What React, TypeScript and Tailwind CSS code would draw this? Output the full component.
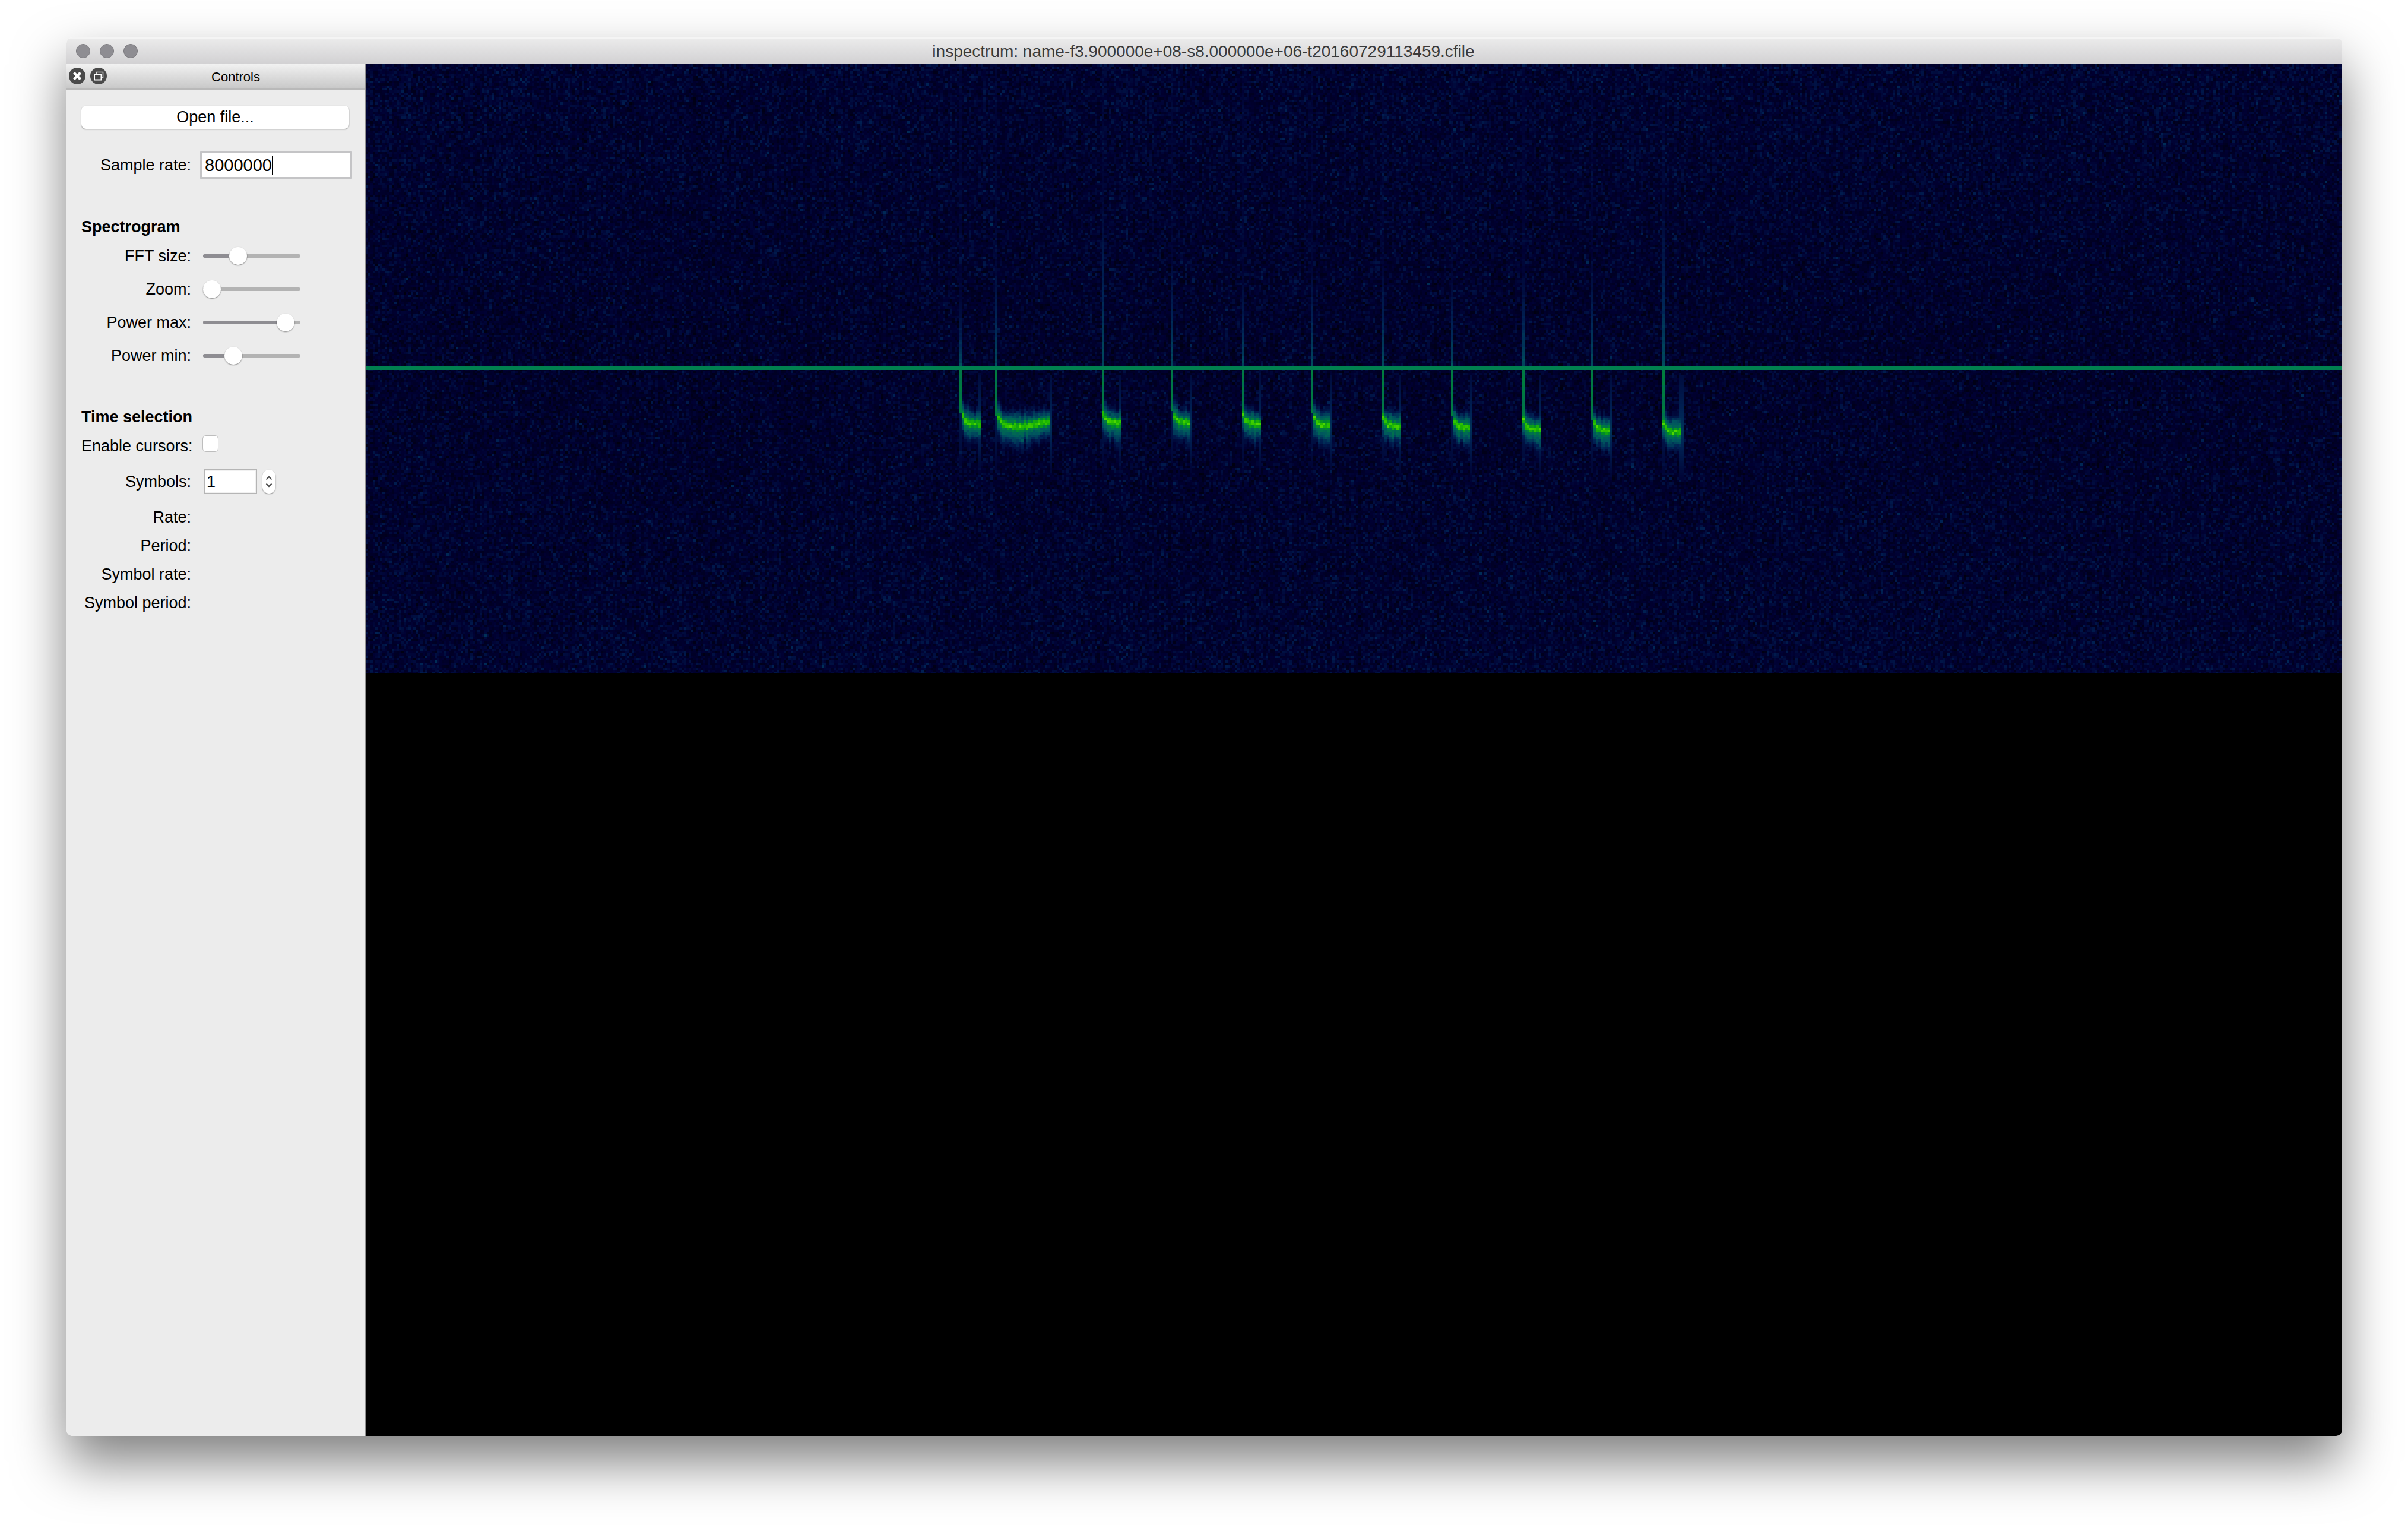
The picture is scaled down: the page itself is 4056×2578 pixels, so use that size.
import { useEffect, useRef } from "react";

const CW = 3329;
const CH = 1025;
const CELL = 4;
const LINE_Y = 619 - 107;

type Burst = { x0: number; x1: number; cy: number; top: number; long?: boolean };

const bursts: Burst[] = [
  { x0: 1620, x1: 1650, cy: 713, top: 510 },
  { x0: 1679, x1: 1769, cy: 716, top: 440, long: true },
  { x0: 1857, x1: 1887, cy: 711, top: 320 },
  { x0: 1975, x1: 2005, cy: 711, top: 430 },
  { x0: 2093, x1: 2123, cy: 713, top: 470 },
  { x0: 2211, x1: 2241, cy: 715, top: 445 },
  { x0: 2329, x1: 2359, cy: 717, top: 445 },
  { x0: 2447, x1: 2477, cy: 719, top: 470 },
  { x0: 2565, x1: 2595, cy: 722, top: 460 },
  { x0: 2683, x1: 2713, cy: 724, top: 445 },
  { x0: 2801, x1: 2832, cy: 727, top: 345 },
];

const stops: [number, number, number, number][] = [
  [0, 0, 0, 14],
  [0.2, 0, 0, 50],
  [0.38, 0, 34, 84],
  [0.55, 0, 85, 95],
  [0.7, 0, 115, 75],
  [0.8, 0, 140, 40],
  [0.92, 30, 185, 0],
  [1, 80, 215, 0],
];

function colour(tIn: number) {
  const t = Math.max(0, Math.min(1, tIn));
  for (let i = 1; i < stops.length; i++) {
    if (t <= stops[i][0]) {
      const a = stops[i - 1];
      const b = stops[i];
      const k = (t - a[0]) / (b[0] - a[0]);
      return [a[1] + (b[1] - a[1]) * k, a[2] + (b[2] - a[2]) * k, a[3] + (b[3] - a[3]) * k];
    }
  }
  return [80, 215, 0];
}

function rng(seed: number) {
  let a = seed;
  return () => {
    a |= 0;
    a = (a + 0x6d2b79f5) | 0;
    let t = Math.imul(a ^ (a >>> 15), 1 | a);
    t = (t + Math.imul(t ^ (t >>> 7), 61 | t)) ^ t;
    return ((t ^ (t >>> 14)) >>> 0) / 4294967296;
  };
}

function Spectrogram() {
  const ref = useRef<HTMLCanvasElement>(null);
  useEffect(() => {
    const ctx = ref.current?.getContext("2d");
    if (!ctx) return;
    const r = rng(1234);
    const gauss = () => (r() + r() + r() + r() - 2) * 1.73;
    const img = ctx.createImageData(CW, CH);
    const cols = Math.ceil(CW / CELL);
    const rows = Math.ceil(CH / CELL);
    const gain = Array.from({ length: cols }, () => gauss() * 0.01);

    for (let c = 0; c < cols; c++) {
      const px = 616 + c * CELL + 2;
      const b = bursts.find((s) => px >= s.x0 - 2 && px <= s.x1 + 2);
      const skirtUp = 22 + r() * 10;
      const skirtDown = 28 + r() * 14;
      for (let w = 0; w < rows; w++) {
        const py = 107 + w * CELL + 2;
        const edge = Math.abs(w - 128) / 128;
        let t = 0.16 + edge * 0.03 + gain[c] + gauss() * 0.06 + (r() > 0.93 ? 0.07 : 0);
        if (b) {
          const dx = px - b.x0;
          let cy = b.cy;
          if (b.long) {
            const k = (px - b.x0) / (b.x1 - b.x0);
            cy = 712 + 6 * Math.sin(Math.min(1, k * 1.2) * Math.PI) - 2 * k;
          }
          cy -= 20 * Math.exp(-dx / 5);
          cy += c % 2 === 0 ? 1 : -1;
          const dy = py - cy;
          const inBurst = px >= b.x0 && px <= b.x1;
          if (inBurst) {
            const core = 0.96 * Math.exp(-((dy / 13) ** 2));
            const skirt =
              dy < 0 ? 0.7 * Math.exp(-(((-dy) / skirtUp) ** 2)) : 0.7 * Math.exp(-((dy / skirtDown) ** 2));
            t = Math.max(t, core + gauss() * 0.035, skirt + gauss() * 0.03);
          }
          if (dx >= -2 && dx < 2) {
            if (py < b.cy - 18) {
              const v =
                py > 619
                  ? 0.72
                  : 0.22 + 0.3 * Math.pow(Math.max(0, 1 - (619 - py) / (619 - b.top)), 1);
              t = Math.max(t, v + gauss() * 0.015);
            } else if (py < b.cy + 70) {
              t = Math.max(t, 0.22 + 0.1 * Math.max(0, 1 - (py - b.cy) / 70));
            }
          }
          if (px >= b.x1 - 2 && px <= b.x1 + 2) {
            if (py > 632 && py < b.cy) t = Math.max(t, 0.26 + ((py - 632) / 80) * 0.16);
            else if (py >= b.cy && py < b.cy + 85) t = Math.max(t, 0.44 - ((py - b.cy) / 85) * 0.24);
          }
        }
        const [cr, cg, cb] = colour(t);
        for (let yy = 0; yy < CELL; yy++) {
          const y = w * CELL + yy;
          if (y >= CH) break;
          for (let xx = 0; xx < CELL; xx++) {
            const x = c * CELL + xx;
            if (x >= CW) break;
            const i = (y * CW + x) * 4;
            img.data[i] = cr;
            img.data[i + 1] = cg;
            img.data[i + 2] = cb;
            img.data[i + 3] = 255;
          }
        }
      }
    }
    ctx.putImageData(img, 0, 0);
    ctx.fillStyle = "#00804f";
    ctx.fillRect(0, LINE_Y - 3, CW, 6);
  }, []);
  return <canvas ref={ref} width={CW} height={CH} className="block h-[1025px] w-[3329px]" />;
}

function Label({ children }: { children: string }) {
  return <span className="w-[185px] shrink-0 whitespace-nowrap text-right">{children}</span>;
}

function SliderRow({ label, pct }: { label: string; pct: number }) {
  return (
    <div className="flex h-[56px] items-center">
      <Label>{label}</Label>
      <div className="relative ml-[20px] h-[6px] w-[164px] rounded-[3px] bg-[#b3b3b3]">
        <div className="h-full rounded-l-[3px] bg-[#8e8d92]" style={{ width: `${pct}%` }} />
        <div
          className="absolute top-[-12px] ml-[-15px] h-[30px] w-[30px] rounded-full bg-white shadow-[0_1px_2px_rgba(0,0,0,0.45)]"
          style={{ left: `${pct}%` }}
        />
      </div>
    </div>
  );
}

function InfoRow({ label }: { label: string }) {
  return (
    <div className="flex h-[48px] items-center">
      <Label>{label}</Label>
    </div>
  );
}

function CloseIcon() {
  return (
    <svg width="28" height="28" viewBox="0 0 28 28">
      <circle cx="14" cy="14" r="14" fill="#4a4a4a" />
      <path d="M8.5 8.5 19.5 19.5M19.5 8.5 8.5 19.5" stroke="#fff" strokeWidth="4.5" />
    </svg>
  );
}

function FloatIcon() {
  return (
    <svg width="28" height="28" viewBox="0 0 28 28">
      <circle cx="14" cy="14" r="14" fill="#4a4a4a" />
      <path d="M10.5 10V7.5H21.5V16.5H18.5" fill="none" stroke="#d8d8d8" strokeWidth="1.6" />
      <rect x="7" y="11" width="11.5" height="9.5" fill="none" stroke="#fff" strokeWidth="2" />
    </svg>
  );
}

export default function App() {
  return (
    <div className="h-[2578px] w-[4056px] overflow-hidden bg-white pl-[112px] pt-[63px] font-['Liberation_Sans',Arial,sans-serif] text-[27px] leading-none text-black">
      <div className="flex h-[2355px] w-[3833px] flex-col overflow-hidden rounded-[10px] shadow-[0_44px_88px_rgba(0,0,0,0.5)]">
        <header className="relative flex h-[44px] shrink-0 items-center justify-center border-t-2 border-[#f4f4f4] bg-gradient-to-b from-[#ebebeb] to-[#d2d1d3] pr-[3px] pt-[2px] text-[28px] text-[#3a3a3a]">
          <div className="absolute left-[16px] top-[9px] flex gap-[16px]">
            <span className="h-[24px] w-[24px] rounded-full border border-[#7b7a7e] bg-[#8e8d92]" />
            <span className="h-[24px] w-[24px] rounded-full border border-[#7b7a7e] bg-[#8e8d92]" />
            <span className="h-[24px] w-[24px] rounded-full border border-[#7b7a7e] bg-[#8e8d92]" />
          </div>
          <span>inspectrum: name-f3.900000e+08-s8.000000e+06-t20160729113459.cfile</span>
        </header>
        <div className="flex min-h-0 flex-1 border-t border-[#b5b5b5]">
          <aside className="w-[504px] shrink-0 border-r-2 border-[#8f8f8f] bg-[#ececec]">
            <div className="relative flex h-[44px] items-center justify-center border-b-[3px] border-[#b9b9b9] bg-gradient-to-b from-[#f1f1f1] to-[#c8c8c8] pl-[68px] pt-[2px] text-[22px]">
              <div className="absolute left-[4px] top-[6px] flex gap-[8px]">
                <CloseIcon />
                <FloatIcon />
              </div>
              <span>Controls</span>
            </div>
            <div className="pl-[25px] pt-[26px]">
              <div className="flex h-[39px] w-[451px] items-center justify-center rounded-[8px] bg-white shadow-[0_1px_2px_rgba(0,0,0,0.4)]">
                Open file...
              </div>
              <div className="mt-[37px] flex h-[48px] items-center">
                <Label>Sample rate:</Label>
                <div className="ml-[15px] flex h-[48px] w-[256px] items-center rounded-[2px] border-[4px] border-[#c4c4c6] bg-white pl-[4px] text-[29px]">
                  <span>8000000</span>
                  <span className="h-[32px] w-[2px] bg-black" />
                </div>
              </div>
              <div className="mt-[65px] flex h-[30px] items-center font-bold">Spectrogram</div>
              <div className="mt-[6px]">
                <SliderRow label="FFT size:" pct={36} />
                <SliderRow label="Zoom:" pct={9} />
                <SliderRow label="Power max:" pct={85} />
                <SliderRow label="Power min:" pct={31} />
              </div>
              <div className="mt-[60px] flex h-[30px] items-center font-bold">Time selection</div>
              <div className="mt-[19px] flex h-[30px] items-center">
                <Label>Enable cursors:</Label>
                <span className="ml-[19px] mt-[-9px] h-[28px] w-[27px] rounded-[6px] border border-[#bdbdbd] bg-white" />
              </div>
              <div className="mt-[24px] flex h-[42px] items-center">
                <Label>Symbols:</Label>
                <div className="ml-[21px] flex h-[42px] w-[90px] items-center border-2 border-[#b5b5b5] bg-white pl-[3px] shadow-[inset_0_0_0_1px_#f1f1f1]">
                  1
                </div>
                <div className="ml-[9px] flex h-[40px] w-[22px] flex-col items-center justify-center gap-[4px] rounded-[11px] bg-white shadow-[0_1px_2px_rgba(0,0,0,0.45)]">
                  <svg width="12" height="8" viewBox="0 0 12 8">
                    <path d="M1.5 6.5 6 2l4.5 4.5" fill="none" stroke="#444" strokeWidth="2" />
                  </svg>
                  <svg width="12" height="8" viewBox="0 0 12 8">
                    <path d="M1.5 1.5 6 6l4.5-4.5" fill="none" stroke="#444" strokeWidth="2" />
                  </svg>
                </div>
              </div>
              <div className="mt-[15px]">
                <InfoRow label="Rate:" />
                <InfoRow label="Period:" />
                <InfoRow label="Symbol rate:" />
                <InfoRow label="Symbol period:" />
              </div>
            </div>
          </aside>
          <main className="min-w-0 flex-1 bg-black">
            <Spectrogram />
          </main>
        </div>
      </div>
    </div>
  );
}
